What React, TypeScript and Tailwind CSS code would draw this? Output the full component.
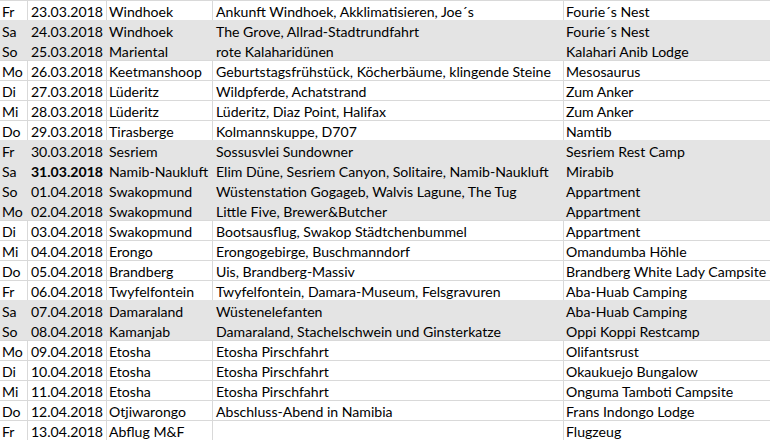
type Row = {
  day: string;
  date: string;
  place: string;
  activity: string;
  stay: string;
  shaded?: boolean;
  bold?: boolean;
};

const rows: Row[] = [
  { day: "Fr", date: "23.03.2018", place: "Windhoek", activity: "Ankunft Windhoek, Akklimatisieren, Joe´s", stay: "Fourie´s Nest" },
  { day: "Sa", date: "24.03.2018", place: "Windhoek", activity: "The Grove, Allrad-Stadtrundfahrt", stay: "Fourie´s Nest", shaded: true },
  { day: "So", date: "25.03.2018", place: "Mariental", activity: "rote Kalaharidünen", stay: "Kalahari Anib Lodge", shaded: true },
  { day: "Mo", date: "26.03.2018", place: "Keetmanshoop", activity: "Geburtstagsfrühstück, Köcherbäume, klingende Steine", stay: "Mesosaurus" },
  { day: "Di", date: "27.03.2018", place: "Lüderitz", activity: "Wildpferde, Achatstrand", stay: "Zum Anker" },
  { day: "Mi", date: "28.03.2018", place: "Lüderitz", activity: "Lüderitz, Diaz Point, Halifax", stay: "Zum Anker" },
  { day: "Do", date: "29.03.2018", place: "Tirasberge", activity: "Kolmannskuppe, D707", stay: "Namtib" },
  { day: "Fr", date: "30.03.2018", place: "Sesriem", activity: "Sossusvlei Sundowner", stay: "Sesriem Rest Camp", shaded: true },
  { day: "Sa", date: "31.03.2018", place: "Namib-Naukluft", activity: "Elim Düne, Sesriem Canyon, Solitaire, Namib-Naukluft", stay: "Mirabib", shaded: true, bold: true },
  { day: "So", date: "01.04.2018", place: "Swakopmund", activity: "Wüstenstation Gogageb, Walvis Lagune, The Tug", stay: "Appartment", shaded: true },
  { day: "Mo", date: "02.04.2018", place: "Swakopmund", activity: "Little Five, Brewer&Butcher", stay: "Appartment", shaded: true },
  { day: "Di", date: "03.04.2018", place: "Swakopmund", activity: "Bootsausflug, Swakop Städtchenbummel", stay: "Appartment" },
  { day: "Mi", date: "04.04.2018", place: "Erongo", activity: "Erongogebirge, Buschmanndorf", stay: "Omandumba Höhle" },
  { day: "Do", date: "05.04.2018", place: "Brandberg", activity: "Uis, Brandberg-Massiv", stay: "Brandberg White Lady Campsite" },
  { day: "Fr", date: "06.04.2018", place: "Twyfelfontein", activity: "Twyfelfontein, Damara-Museum, Felsgravuren", stay: "Aba-Huab Camping" },
  { day: "Sa", date: "07.04.2018", place: "Damaraland", activity: "Wüstenelefanten", stay: "Aba-Huab Camping", shaded: true },
  { day: "So", date: "08.04.2018", place: "Kamanjab", activity: "Damaraland, Stachelschwein und Ginsterkatze", stay: "Oppi Koppi Restcamp", shaded: true },
  { day: "Mo", date: "09.04.2018", place: "Etosha", activity: "Etosha Pirschfahrt", stay: "Olifantsrust" },
  { day: "Di", date: "10.04.2018", place: "Etosha", activity: "Etosha Pirschfahrt", stay: "Okaukuejo Bungalow" },
  { day: "Mi", date: "11.04.2018", place: "Etosha", activity: "Etosha Pirschfahrt", stay: "Onguma Tamboti Campsite" },
  { day: "Do", date: "12.04.2018", place: "Otjiwarongo", activity: "Abschluss-Abend in Namibia", stay: "Frans Indongo Lodge" },
  { day: "Fr", date: "13.04.2018", place: "Abflug M&F", activity: "", stay: "Flugzeug" },
];

function Cell({ children, shaded, className = "" }: { children?: React.ReactNode; shaded?: boolean; className?: string }) {
  return (
    <div
      className={
        "h-5 border-t border-r whitespace-nowrap overflow-hidden leading-[21px] " +
        (shaded ? "bg-[#e4e4e4] border-[#e4e4e4] " : "bg-white border-[#d9d9d9] ") +
        className
      }
    >
      {children}
    </div>
  );
}

export default function App() {
  return (
    <div
      className="w-[770px] h-[440px] overflow-hidden bg-white text-black text-[14.1px]"
      style={{ fontFamily: "Lato, 'Open Sans', sans-serif" }}
    >
      <div className="grid grid-cols-[28px_79px_106px_351px_1fr]">
        {rows.map((r) => (
          <div key={r.date} className="contents">
            <Cell shaded={r.shaded} className="pl-[2px]">{r.day}</Cell>
            <Cell shaded={r.shaded} className={"text-right pr-[3px] " + (r.bold ? "font-bold" : "")}>{r.date}</Cell>
            <Cell shaded={r.shaded} className="pl-[2px]">{r.place}</Cell>
            <Cell shaded={r.shaded} className="pl-[3px]">{r.activity}</Cell>
            <Cell shaded={r.shaded} className="pl-[2px] border-r-0">{r.stay}</Cell>
          </div>
        ))}
      </div>
    </div>
  );
}
